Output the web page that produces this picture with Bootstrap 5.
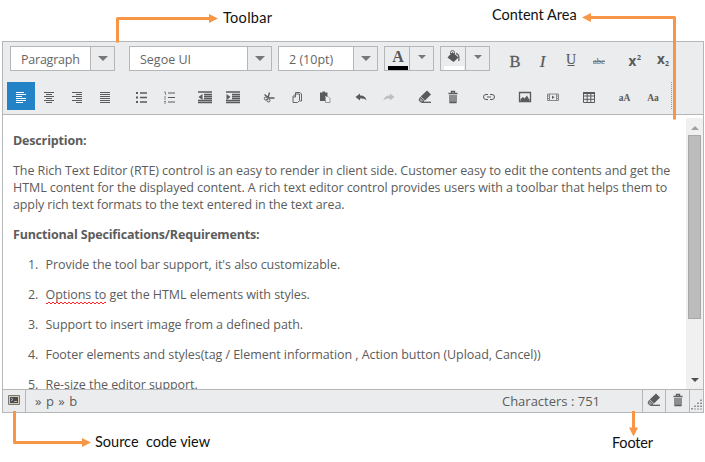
<!DOCTYPE html>
<html lang="en">
<head>
<meta charset="utf-8">
<title>Rich Text Editor</title>
<link href="https://cdn.jsdelivr.net/npm/bootstrap@5.3.0/dist/css/bootstrap.min.css" rel="stylesheet">
<style>
body{width:705px;height:462px;overflow:hidden;background:#fff;color:#5c5c5c;font:12.5px/17px "Open Sans","Noto Sans",sans-serif}
.editor{width:702px;height:372px;margin:41px 0 0 2px;border:1px solid #b4b6b8}
.tools{height:73px;background:#eaecee;border-bottom:1px solid #b4b6b8}
.tools-top{height:40px;padding:4px 0 0 7px}
.combo{height:25px;border:1px solid #b4b6b8;background:#fff;line-height:25px;color:#666}
.combo .arrow{width:24px;border-left:1px solid #b4b6b8;background:#eaecee}
.combo.tint{background:#eaecee}
.arrow::after{content:"";border:5px solid transparent;border-top-color:#777;border-bottom:0;display:block}
.tint .arrow::after{border-width:4px 4px 0;margin-bottom:3px}
.w1{width:105px;margin-right:14px;padding-left:10px;letter-spacing:-.23px}
.w2{width:143px;margin-right:6px;padding-left:10px}
.w3{width:100px;margin-right:6px;padding-left:10px}
.w4{width:50px;margin-right:6px}
.cell{width:28px;height:28px;flex:none;display:flex;align-items:center;justify-content:center;color:#5a5a5a}
.cell.on{background:#2482c6;color:#fff}
.gap8{margin-left:8px}
.serif{font-family:"Liberation Serif",serif}
svg{display:block;overflow:visible;flex:none}
.cell svg{margin-top:1px}
.doc{height:274px}
.page-text{padding:17px 0 0 10px;white-space:nowrap;letter-spacing:-.07px}
.page-text p{margin:0 0 13px}
.page-text b{letter-spacing:-.165px}
.page-text .tight{letter-spacing:-.12px}
.page-text p.li-row{margin-left:15px;letter-spacing:-.06px}
.num{display:inline-block;width:17.5px}
.misspelt{padding-bottom:1px;background:linear-gradient(90deg,#f22 50%,transparent 50%) 0 100%/4px 1px repeat-x,linear-gradient(90deg,transparent 50%,#f22 50%) 0 calc(100% - 1px)/4px 1px repeat-x}
.scroll{width:17px;margin-top:3px;background:#f0f0f0}
.thumb{width:13px;height:184px;background:#bcbcbc;border:1px solid #a8a8a8}
.foot{height:23px;background:#eaecee;border-top:1px solid #b4b6b8;font-size:13px}
.crumbs{padding-left:9px;word-spacing:1px;letter-spacing:.05px}
.count{margin-right:42px}
.foot-btn{width:23px}
.foot-btn+.foot-btn{width:24px}
.bar-l{border-left:1px solid #b4b6b8}
.note{position:absolute;color:#111;font:14.5px/18px Lato,sans-serif;white-space:pre}
.n1{left:223px;top:9px;letter-spacing:.3px}.n2{left:492px;top:6px}.n3{left:95px;top:433px}.n4{left:612px;top:434px;letter-spacing:-.2px}
.wires{position:absolute;left:0;top:0;pointer-events:none}
</style>
<script src="https://cdn.jsdelivr.net/npm/bootstrap@5.3.0/dist/js/bootstrap.bundle.min.js"></script>
</head>
<body>
<svg width="0" height="0" class="position-absolute">
<defs>
<symbol id="eraser" viewBox="0 0 14 14"><path d="M9 .5l4 4-6 6-4.300-4z" fill="currentColor"/><path d="M2.300 7.300L6 10.800l-1.300 1.400H3L1 10.300z" fill="#999" stroke="currentColor"/><path d="M4 12.300h9" stroke="currentColor" stroke-width="1.300"/></symbol>
<symbol id="trash" viewBox="0 0 14 14"><path d="M2.500 3.500h9M5.500 3V1.500h3V3M4 5v7.500h6V5M6 5v7M8 5v7" fill="none" stroke="currentColor" stroke-width="1.300"/></symbol>
</defs></svg>
<main class="editor d-flex flex-column">
<div class="tools">
<div class="tools-top d-flex">
 <div class="combo w1 d-flex justify-content-between"><span>Paragraph</span><span class="arrow d-flex align-items-center justify-content-center"></span></div>
 <div class="combo w2 d-flex justify-content-between"><span>Segoe UI</span><span class="arrow d-flex align-items-center justify-content-center"></span></div>
 <div class="combo w3 d-flex justify-content-between"><span>2 (10pt)</span><span class="arrow d-flex align-items-center justify-content-center"></span></div>
 <div class="combo tint w4 d-flex justify-content-between"><svg width="24" height="23"><text x="13" y="15" text-anchor="middle" font-family="Liberation Serif" font-weight="bold" font-size="16" fill="#555">A</text><path d="M3 19h20v4H3z"/></svg><span class="arrow d-flex align-items-center justify-content-center"></span></div>
 <div class="combo tint w4 d-flex justify-content-between"><svg width="24" height="23"><path d="M11.500 5l6 5.500-5 4.500-6-4.500z" fill="#555"/><path d="M9.500 7V5.500a2 2 0 0 1 4 0V8" fill="none" stroke="#666"/><path d="M15 6.500c2.500 0 3.300 3 2.800 7.500" fill="none" stroke="#666" stroke-width="1.300"/><path d="M3 19h20v4H3z" fill="#fff"/></svg><span class="arrow d-flex align-items-center justify-content-center"></span></div>
 <svg width="180" height="28" fill="#5a5a5a" font-family="Liberation Serif"><g text-anchor="middle"><text x="19" y="20.500" font-size="16.500" stroke="#5a5a5a" stroke-width=".3">B</text><text x="46.500" y="20.500" font-size="17" font-style="italic" stroke="#5a5a5a" stroke-width=".2">I</text><text x="75" y="18" font-size="14" stroke="#5a5a5a" stroke-width=".2">U</text><path d="M71.500 19.500h7" stroke="#5a5a5a"/><text x="103" y="17.500" font-size="8.500">abc</text><path d="M97 15.500h12" stroke="#777"/></g><g font-family="Open Sans" font-weight="bold"><text x="132.500" y="19.500" font-size="13.500">x</text><text x="141" y="14" font-size="7">2</text><text x="161" y="18" font-size="13.500">x</text><text x="169" y="20" font-size="7">2</text></g></svg>
</div>
<div class="d-flex ps-1">
 <span class="cell on"><svg width="12" height="12"><path d="M1 1.500h8M1 3.500h10M1 5.500h6M1 7.500h10M1 9.500h10M1 11.500h7" stroke="currentColor"/></svg></span>
 <span class="cell"><svg width="12" height="12"><path d="M1 1.500h10M3 3.500h6M1 5.500h10M3 7.500h6M1 9.500h10M3 11.500h6" stroke="currentColor"/></svg></span>
 <span class="cell"><svg width="12" height="12"><path d="M1 1.500h10M5 3.500h6M1 5.500h10M5 7.500h6M1 9.500h10M5 11.500h6" stroke="currentColor"/></svg></span>
 <span class="cell"><svg width="12" height="12"><path d="M1 1.500h10M1 3.500h10M1 5.500h10M1 7.500h10M1 9.500h10M1 11.500h10" stroke="currentColor"/></svg></span>
 <span class="cell gap8"><svg width="12" height="12"><path d="M1 2h2M1 6.500h2M1 11h2" stroke="currentColor" stroke-width="2"/><path d="M5 2h7M5 6.500h7M5 11h7" stroke="currentColor" stroke-width="1.300"/></svg></span>
 <span class="cell"><svg width="12" height="12"><path d="M1 1h1.500v3M1 6h2M1 8h2M1 10.500h2M1 12h2" fill="none" stroke="#888"/><path d="M5 2h7M5 6.500h7M5 11h7" stroke="currentColor" stroke-width="1.200"/></svg></span>
 <span class="cell gap8"><svg width="14" height="12"><path d="M0 1h14M6 3.500h8M6 5.500h8M6 7.500h8M0 9.500h14M0 11.500h14" stroke="currentColor" stroke-width="1.300"/><path d="M4.500 3v6L0.500 6z" fill="currentColor"/></svg></span>
 <span class="cell"><svg width="14" height="12"><path d="M0 1h14M6 3.500h8M6 5.500h8M6 7.500h8M0 9.500h14M0 11.500h14" stroke="currentColor" stroke-width="1.300"/><path d="M0.500 3v6L4.500 6z" fill="currentColor"/></svg></span>
 <span class="cell gap8"><svg width="12" height="12"><path d="M6.500 1.500L5 7M1.500 3.500L6 7h5.500" fill="none" stroke="currentColor" stroke-width="1.300"/><circle cx="2.800" cy="7.500" r="1.500" fill="none" stroke="currentColor"/><circle cx="5.500" cy="9.500" r="1.500" fill="none" stroke="currentColor"/></svg></span>
 <span class="cell"><svg width="12" height="12"><path d="M4.500 3V1.500H9L10.500 3v7h-2M4.500 3L2 5.500v6h4.500l2-2V3zM4.500 3v3H2" fill="none" stroke="#666"/></svg></span>
 <span class="cell"><svg width="12" height="12"><path d="M1 1.500h2.500V.5h2.500v1h2.500V5H6v5H1z" fill="currentColor"/><path d="M6.500 5.500h2.500l2 2v4H6.500z" fill="#eee" stroke="#999"/></svg></span>
 <span class="cell gap8"><svg width="12" height="12"><path d="M.5 6L5 2.500v2c4 0 6 2 6.500 5C9.500 7.500 8 7.500 5 7.500v2z" fill="currentColor"/></svg></span>
 <span class="cell"><svg width="12" height="12"><path d="M11.500 6L7 2.500v2c-4 0-6 2-6.500 5C2.500 7.500 4 7.500 7 7.500v2z" fill="#bcbec0"/></svg></span>
 <span class="cell gap8"><svg width="14" height="14"><use href="#eraser"/></svg></span>
 <span class="cell"><svg width="14" height="14"><use href="#trash"/></svg></span>
 <span class="cell gap8"><svg width="12" height="12"><path d="M5 3.500H3a2.500 2.500 0 0 0 0 5H5M7 3.500h2a2.500 2.500 0 0 1 0 5H7M4 6h4" fill="none" stroke="currentColor"/></svg></span>
 <span class="cell gap8"><svg width="12" height="12"><path d="M.5 1.500h11v9H.5z" fill="none" stroke="currentColor" stroke-width="1.300"/><path d="M1.500 10V8L4 6l1.500 1.500L8 4.500l1.500 3 1 .5v2z" fill="currentColor"/></svg></span>
 <span class="cell"><svg width="12" height="12"><path d="M.5 3h11v6.500H.5zM2.500 3v6.500M9.500 3v6.500M.5 5h2M.5 7.500h2M9.500 5h2M9.500 7.500h2" fill="none" stroke="#888"/><path d="M5 4.500v3.500l2.500-1.700z" fill="currentColor"/></svg></span>
 <span class="cell gap8"><svg width="12" height="12"><path d="M.5 1.500h11v10H.5zM.5 5h11M.5 8.300h11M4.200 2v9.500M7.800 2v9.500" fill="none" stroke="currentColor"/><path d="M0 1h12v2H0z" fill="currentColor"/></svg></span>
 <span class="cell gap8 serif"><svg width="12" height="12"><text x="5.500" y="10" text-anchor="middle" font-size="9.500" font-weight="bold" fill="currentColor">aA</text></svg></span>
 <span class="cell serif"><svg width="12" height="12"><text x="6" y="10" text-anchor="middle" font-size="9.500" font-weight="bold" fill="currentColor">Aa</text></svg></span>
 <svg width="6" height="28"><path d="M4.500 0v28" stroke="#999" stroke-dasharray="1 1"/></svg>
</div>
</div>
<div class="doc d-flex justify-content-between overflow-hidden">
<div class="page-text">
 <p><b>Description:</b></p>
 <p>The Rich Text Editor (RTE) control is an easy to render in client side. Customer easy to edit the contents and get the<br>HTML content for the displayed content. A rich text editor control provides users with a toolbar that helps them to<br><span class="tight">apply rich text formats to the text entered in the text area.</span></p>
 <p><b>Functional Specifications/Requirements:</b></p>
 <p class="li-row"><span class="num">1.</span><span>Provide the tool bar support, it's also customizable.</span></p>
 <p class="li-row"><span class="num">2.</span><span class="misspelt">Options to</span> get the HTML elements with styles.</p>
 <p class="li-row"><span class="num">3.</span><span>Support to insert image from a defined path.</span></p>
 <p class="li-row"><span class="num">4.</span><span>Footer elements and styles(tag / Element information , Action button (Upload, Cancel))</span></p>
 <p class="li-row"><span class="num">5.</span><span>Re-size the editor support.</span></p>
</div>
<div class="scroll d-flex flex-column align-items-center"><svg width="17" height="17"><path d="M5 12h8L9 8z" fill="#a0a0a0"/></svg><div class="thumb"></div><svg class="mt-auto" width="17" height="17"><path d="M5 6h8l-4 4z" fill="#505050"/></svg></div>
</div>
<div class="foot d-flex align-items-center">
 <svg width="22" height="22"><path d="M5.500 5.500h11v9h-11z" fill="#d8cbb4" stroke="#777"/><path d="M7 7h8v6H7z" fill="#4c4c4c"/><path d="M8 8l2 1.500L8 11M11 11.500h3" fill="none" stroke="#ddd" stroke-width=".7"/></svg>
 <span class="bar-l h-100 crumbs d-flex align-items-center">» p » b</span>
 <span class="ms-auto count">Characters : 751</span>
 <span class="bar-l foot-btn h-100 d-flex justify-content-center"><svg class="mt-1" width="14" height="14"><use href="#eraser" y="-1"/></svg></span>
 <span class="bar-l foot-btn h-100 d-flex justify-content-center"><svg class="mt-1" width="14" height="14"><use href="#trash" y="-1"/></svg></span>
 <span class="bar-l h-100"><svg width="13" height="22" stroke="#777" stroke-width="1.500" stroke-dasharray="1.500 1.500"><path d="M11 9.500v10M8 12.500v7M5 15.500v4M2 18v1.500"/></svg></span>
</div>
</main>
<div class="note n1">Toolbar</div><div class="note n2">Content Area</div><div class="note n3">Source  code view</div><div class="note n4">Footer</div>
<svg class="wires" width="705" height="462"><g fill="none" stroke="#f79646" stroke-width="3" stroke-linejoin="round"><path d="M117.500 42.500V18.500H211"/><path d="M674.500 119.500V17.500H590"/><path d="M14.500 411V442.500H84"/><path d="M633.500 411V429"/></g><path d="M209 14l9 4.500-9 4.500zM591 13l-9 4.500 9 4.500zM82 438l9 4.500-9 4.500zM629 427.500h9l-4.500 9z" fill="#f79646"/></svg>
</body>
</html>
